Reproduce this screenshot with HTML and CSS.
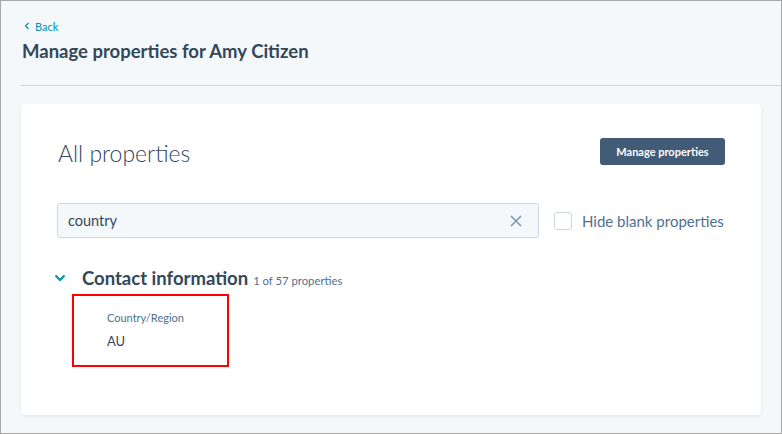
FILE: index.html
```html
<!DOCTYPE html>
<html>
<head>
<meta charset="utf-8">
<link rel="stylesheet" href="styles.css">
</head>
<body>
<div class="frame">
  <header class="head">
    <a class="back" href="#"><svg class="back-ico" width="6" height="8" viewBox="0 0 6 8"><path d="M4.5 1 L1.5 4 L4.5 7" fill="none" stroke="#0091ae" stroke-width="1.2"/></svg>Back</a>
    <h1 class="title">Manage properties for Amy Citizen</h1>
  </header>
  <div class="rule"></div>
  <main class="card">
    <div class="card-top">
      <h2 class="card-title">All properties</h2>
      <button class="btn">Manage properties</button>
    </div>
    <div class="filters">
      <div class="search">
        <span class="search-text">country</span>
        <svg class="clear" width="12" height="12" viewBox="0 0 12 12"><path d="M1 1 L11 11 M11 1 L1 11" stroke="#7c98b6" stroke-width="1.6" fill="none"/></svg>
      </div>
      <label class="check"><span class="box"></span><span class="check-label">Hide blank properties</span></label>
    </div>
    <div class="group">
      <svg class="caret" width="12" height="8" viewBox="0 0 12 8"><path d="M1.5 1.5 L6 6 L10.5 1.5" fill="none" stroke="#0091ae" stroke-width="2.2"/></svg>
      <span class="group-title">Contact information</span>
      <span class="group-count">1 of 57 properties</span>
    </div>
    <div class="prop">
      <div class="prop-label">Country/Region</div>
      <div class="prop-value">AU</div>
    </div>
  </main>
</div>
</body>
</html>
```
FILE: styles.css
```css
* { box-sizing: border-box; }
html, body { margin: 0; padding: 0; }
body {
  width: 782px; height: 434px;
  font-family: Lato, "Noto Sans", sans-serif;
  color: #33475b;
  background: #f5f8fa;
}
.frame {
  width: 782px; height: 434px;
  border: 1px solid #a8a8a8;
  background: #f5f8fa;
  display: flex; flex-direction: column;
  overflow: hidden;
}
.head { padding: 18px 0 0 21px; }
.back {
  display: flex; align-items: center; gap: 5px;
  color: #0091ae; font-size: 11px; text-decoration: none;
  padding-left: 2px; height: 14px;
}
.back-ico { display: block; }
.title {
  margin: 7px 0 0 0;
  font-size: 18.5px; font-weight: 700; color: #33475b;
  line-height: 22px;
}
.rule { height: 1px; background: #cbd6e2; margin: 23px 0 0 20px; }
.card {
  margin: 18px 20px 0 20px;
  height: 311px;
  background: #fff;
  border-radius: 3px;
  box-shadow: 0 1px 3px rgba(45,62,80,0.10);
  padding: 34px 36px 0 36px;
}
.card-top { display: flex; justify-content: space-between; align-items: flex-start; }
.card-title { margin: 1px 0 0 1px; font-size: 23px; font-weight: 300; line-height: 28px; color: #33475b; }
.btn {
  width: 125px; height: 27px;
  background: #425b76; color: #fff; border: 0; border-radius: 3px;
  font-family: inherit; font-size: 11px; font-weight: 700;
  padding: 0; margin-top: 0;
}
.filters { display: flex; align-items: center; margin-top: 36px; }
.search {
  width: 482px; height: 35px;
  background: #f5f8fa; border: 1px solid #cbd6e2; border-radius: 3px;
  display: flex; align-items: center; justify-content: space-between;
  padding: 0 16px 0 10px;
}
.search-text { font-size: 14.5px; color: #33475b; }
.clear { display: block; }
.check { display: flex; align-items: center; margin-left: 15px; }
.box { width: 18px; height: 18px; border: 1px solid #cbd6e2; border-radius: 3px; background: #fff; }
.check-label { margin-left: 10px; font-size: 15px; color: #516f90; }
.group { display: flex; align-items: baseline; margin-top: 29px; }
.caret { margin: 0 16px 0 -3px; align-self: center; }
.group-title { font-size: 18.5px; font-weight: 700; color: #33475b; line-height: 22px; }
.group-count { margin-left: 5px; font-size: 11.3px; color: #516f90; }
.prop {
  width: 157px; height: 73px;
  margin: 5px 0 0 15px;
  border: 2px solid #f00;
  padding: 15px 0 0 33px;
}
.prop-label { font-size: 11px; color: #516f90; line-height: 14px; }
.prop-value { margin-top: 8px; font-size: 13px; color: #33475b; line-height: 16px; }
```
